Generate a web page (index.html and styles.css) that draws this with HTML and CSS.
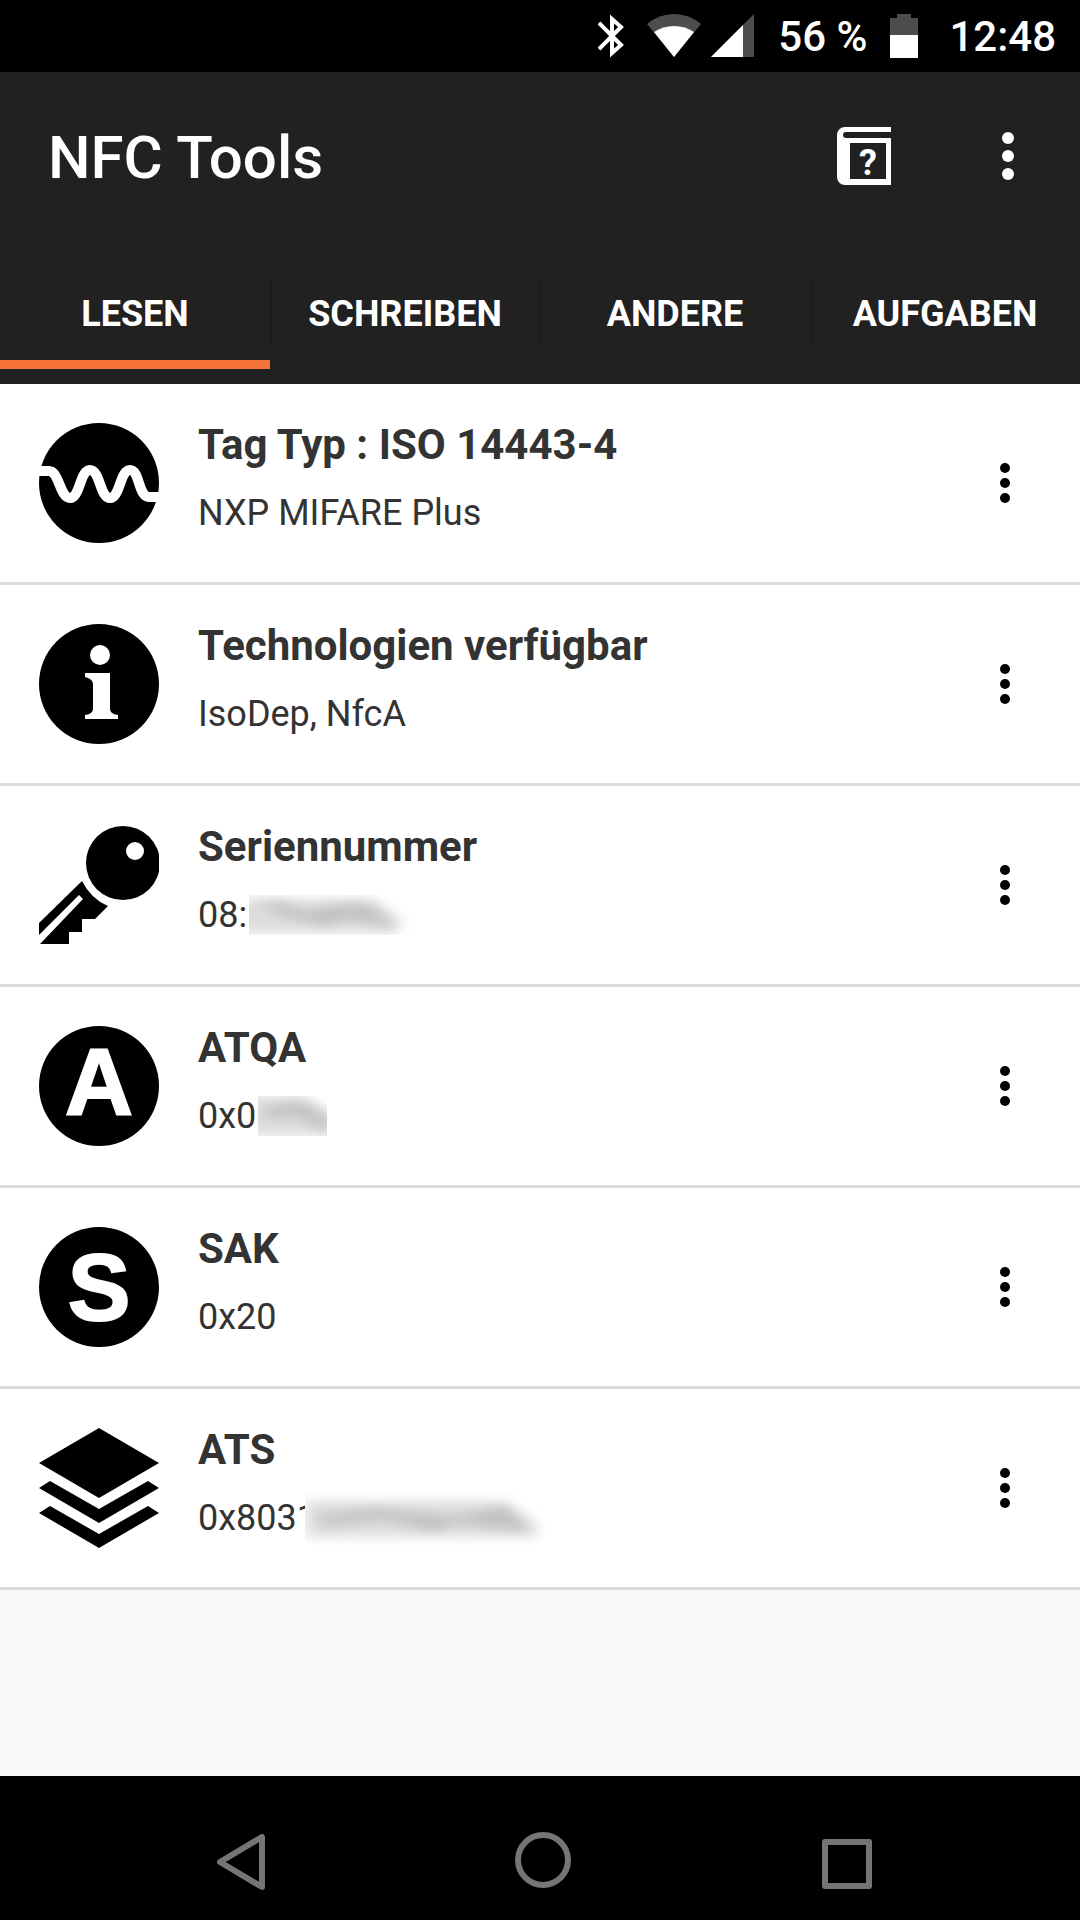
FILE: index.html
```html
<!DOCTYPE html>
<html lang="de">
<head>
    <meta charset="UTF-8">
    <meta name="viewport" content="width=device-width, initial-scale=1.0">
    <title>NFC Tools</title>
    <link rel="stylesheet" href="styles.css">
</head>
<body>
    <!-- Symbols used more than once -->
    <svg class="defs" width="0" height="0" aria-hidden="true">
        <symbol id="dots" viewBox="0 0 48 48">
            <circle cx="24" cy="6" r="6"/>
            <circle cx="24" cy="24" r="6"/>
            <circle cx="24" cy="42" r="6"/>
        </symbol>
        <filter id="soft" x="-20%" y="-50%" width="140%" height="200%">
            <feGaussianBlur stdDeviation="7 6"/>
        </filter>
    </svg>

    <div class="status-bar">
        <svg width="26" height="44" viewBox="0 0 26 44" fill="none" stroke="#fff" stroke-width="4">
            <path d="M1 9L23 31L14 39V5L23 13L1 35"/>
        </svg>
        <div class="signals">
            <svg width="54" height="44" viewBox="0 0 54 44">
                <path fill="#4d4d4d" d="M27 43L0 10Q12 0 27 0T54 10Z"/>
                <path fill="#fff" d="M27 43L7 18Q16 12 27 12T47 18Z"/>
            </svg>
            <svg width="44" height="44" viewBox="0 0 44 44">
                <path fill="#4d4d4d" d="M43 0V43H0Z"/>
                <path fill="#fff" d="M32 11V43H0Z"/>
            </svg>
        </div>
        <span>56 %</span>
        <svg width="28" height="44" viewBox="0 0 28 44">
            <path fill="#4d4d4d" d="M7 0H21V4H28V22H0V4H7Z"/>
            <path fill="#fff" d="M0 21H28V44H0Z"/>
        </svg>
        <span class="clock">12:48</span>
    </div>

    <header class="header">
        <div class="app-bar">
            <h1>NFC Tools</h1>
            <button class="icon-button" aria-label="Hilfe">
                <svg width="54" height="58" viewBox="0 0 54 58">
                    <path fill="#fff" fill-rule="evenodd" d="M8 0H54V5H9a3 3 0 0 0 0 6H54V58H8a8 8 0 0 1-8-8V8a8 8 0 0 1 8-8ZM13 16V52H49V16Z"/>
                    <text class="help-mark" x="31" y="48" text-anchor="middle">?</text>
                </svg>
            </button>
            <button class="icon-button" aria-label="Menü">
                <svg width="48" height="48"><use href="#dots"/></svg>
            </button>
        </div>
        <div class="tabs" role="tablist">
            <button class="tab active" role="tab" aria-selected="true">LESEN</button>
            <button class="tab" role="tab" aria-selected="false">SCHREIBEN</button>
            <button class="tab" role="tab" aria-selected="false">ANDERE</button>
            <button class="tab" role="tab" aria-selected="false">AUFGABEN</button>
        </div>
    </header>

    <main>
        <ul class="tag-list">
            <li class="tag-item">
                <svg class="tag-icon" viewBox="0 0 120 120">
                    <circle cx="60" cy="60" r="60"/>
                    <path fill="none" stroke="#fff" stroke-width="10" d="M-1 48H10C20 48 21 75 31 75S41 47 51 47S61 75 71 75S81 47 91 47S99 74 110 74H121"/>
                </svg>
                <div class="info">
                    <h2>Tag Typ : ISO 14443-4</h2>
                    <p>NXP MIFARE Plus</p>
                </div>
                <button class="more" aria-label="Mehr">
                    <svg width="40" height="40"><use href="#dots"/></svg>
                </button>
            </li>
            <li class="tag-item">
                <svg class="tag-icon" viewBox="0 0 120 120">
                    <circle cx="60" cy="60" r="60"/>
                    <circle cx="61" cy="31" r="10" fill="#fff"/>
                    <path fill="#fff" d="M46 49H71V85Q71 90 79 91V95H46V91Q54 90 54 85V60Q54 55 46 53Z"/>
                </svg>
                <div class="info">
                    <h2>Technologien verfügbar</h2>
                    <p>IsoDep, NfcA</p>
                </div>
                <button class="more" aria-label="Mehr">
                    <svg width="40" height="40"><use href="#dots"/></svg>
                </button>
            </li>
            <li class="tag-item">
                <svg class="tag-icon" viewBox="0 0 120 120">
                    <circle cx="84" cy="38" r="37"/>
                    <circle cx="96" cy="26" r="9" fill="#fff"/>
                    <path d="M43 56L0 98V110L40 70L44 74L1 119H30V107H43V94H56L69 81Q52 74 43 56Z"/>
                </svg>
                <div class="info">
                    <h2>Seriennummer</h2>
                    <p><span class="value">08:<svg class="smudge" width="162" height="40" viewBox="0 0 162 40">
                        <path class="smudge-base" filter="url(#soft)" d="M-20 4H122L150 22V38H-20Z"/>
                        <path class="smudge-dark" filter="url(#soft)" d="M4 8H34L54 16L94 10H120L148 32L100 24L76 30L40 22Z"/>
                    </svg></span></p>
                </div>
                <button class="more" aria-label="Mehr">
                    <svg width="40" height="40"><use href="#dots"/></svg>
                </button>
            </li>
            <li class="tag-item">
                <svg class="tag-icon" viewBox="0 0 120 120">
                    <circle cx="60" cy="60" r="60"/>
                    <text class="letter" x="60" y="89" text-anchor="middle">A</text>
                </svg>
                <div class="info">
                    <h2>ATQA</h2>
                    <p><span class="value">0x0<svg class="smudge" width="69" height="40" viewBox="0 0 69 40">
                        <path class="smudge-base" filter="url(#soft)" d="M-20 0H42L84 20V40H-20Z"/>
                        <path class="smudge-dark" filter="url(#soft)" d="M4 12L44 6L76 28L64 34L40 20L8 22Z"/>
                    </svg></span></p>
                </div>
                <button class="more" aria-label="Mehr">
                    <svg width="40" height="40"><use href="#dots"/></svg>
                </button>
            </li>
            <li class="tag-item">
                <svg class="tag-icon" viewBox="0 0 120 120">
                    <circle cx="60" cy="60" r="60"/>
                    <text class="letter" x="60" y="93" text-anchor="middle">S</text>
                </svg>
                <div class="info">
                    <h2>SAK</h2>
                    <p>0x20</p>
                </div>
                <button class="more" aria-label="Mehr">
                    <svg width="40" height="40"><use href="#dots"/></svg>
                </button>
            </li>
            <li class="tag-item">
                <svg class="tag-icon" viewBox="0 0 120 120">
                    <path d="M60 0L120 35L60 70L0 35Z"/>
                    <path d="M0 60L11 53L60 81L109 53L120 60L60 95Z"/>
                    <path d="M0 85L11 78L60 106L109 78L120 85L60 120Z"/>
                </svg>
                <div class="info">
                    <h2>ATS</h2>
                    <p><span class="value">0x8031<svg class="smudge over" width="240" height="54" viewBox="0 0 240 54">
                        <path class="smudge-base" filter="url(#soft)" d="M0 10H200L232 34V46H0Z"/>
                        <path class="smudge-dark" filter="url(#soft)" d="M10 26L68 18L110 22L150 26L200 16L226 40L150 32L130 40L80 28L20 34Z"/>
                    </svg></span></p>
                </div>
                <button class="more" aria-label="Mehr">
                    <svg width="40" height="40"><use href="#dots"/></svg>
                </button>
            </li>
        </ul>
    </main>

    <nav class="nav-bar">
        <button aria-label="Zurück">
            <svg width="60" height="60" viewBox="0 0 60 60"><path d="M51 7V57L9 32Z"/></svg>
        </button>
        <button aria-label="Startbildschirm">
            <svg width="60" height="60" viewBox="0 0 60 60"><circle cx="30" cy="30" r="25"/></svg>
        </button>
        <button aria-label="Übersicht">
            <svg width="60" height="60" viewBox="0 0 60 60"><path d="M10 12H54V56H10Z"/></svg>
        </button>
    </nav>
</body>
</html>
```
FILE: styles.css
```css
* {
    margin: 0;
    padding: 0;
    box-sizing: border-box;
    font-family: Roboto, sans-serif;
}

body {
    display: flex;
    flex-direction: column;
    min-height: 100vh;
    background: #fafafa;
}

svg {
    display: block;
    flex-shrink: 0;
}

button {
    border: none;
    background: none;
    cursor: pointer;
}

.defs {
    position: absolute;
}

/* Status Bar */
.status-bar {
    display: flex;
    justify-content: flex-end;
    align-items: center;
    gap: 23px;
    height: 72px;
    padding-right: 24px;
    background: #000;
    color: #fff;
    font-size: 42px;
    font-weight: 500;
}

.signals {
    display: flex;
    gap: 10px;
}

.clock {
    margin-left: 8px;
}

/* Header */
.header {
    padding-bottom: 15px;
    background: #212121;
    color: #fff;
}

.app-bar {
    display: flex;
    align-items: center;
    height: 168px;
    padding-left: 48px;
}

.app-bar h1 {
    flex: 1;
    padding-top: 2px;
    font-size: 60px;
    font-weight: 500;
}

.icon-button {
    display: flex;
    justify-content: center;
    align-items: center;
    width: 144px;
    height: 144px;
    fill: #fff;
}

.help-mark {
    font-size: 36px;
    font-weight: 700;
}

/* Tabs */
.tabs {
    display: flex;
    margin-top: 24px;
}

.tab {
    flex: 1 1 0;
    height: 105px;
    padding-top: 4px;
    border-bottom: 9px solid transparent;
    color: #fff;
    font-size: 36px;
    font-weight: 700;
}

.tab + .tab {
    background: linear-gradient(#1d1d1d, #1d1d1d) no-repeat left center / 2px 72px;
}

.tab.active {
    border-bottom-color: #f77438;
}

/* Tag List */
.tag-list {
    list-style: none;
}

.tag-item {
    display: flex;
    align-items: center;
    min-height: 201px;
    padding-left: 39px;
    background: #fff;
    border-bottom: 3px solid #dbdbdb;
}

.tag-icon {
    width: 120px;
    height: 120px;
    margin-right: 39px;
}

.letter {
    fill: #fff;
    stroke: #fff;
    stroke-width: 2px;
    font-family: "Liberation Sans", sans-serif;
    font-size: 94px;
    font-weight: 700;
}

.info {
    flex: 1;
    padding-bottom: 14px;
    color: #333;
}

.info h2 {
    margin-bottom: 14px;
    font-size: 42px;
    font-weight: 700;
    line-height: 60px;
}

.info p {
    font-size: 36px;
    line-height: 48px;
}

.more {
    display: flex;
    justify-content: center;
    align-items: center;
    width: 150px;
    height: 150px;
}

/* Blurred-out values */
.value {
    position: relative;
    display: inline-block;
}

.smudge {
    position: absolute;
    top: 50%;
    left: 100%;
    margin-left: 2px;
    transform: translateY(-50%);
    overflow: hidden;
    background: #fff;
}

.smudge.over {
    margin-left: -12px;
}

.smudge-base {
    fill: #dedede;
}

.smudge-dark {
    fill: #c0c0c0;
}

/* Navigation Bar */
.nav-bar {
    display: grid;
    grid-template-columns: repeat(3, 1fr);
    height: 144px;
    margin-top: auto;
    padding: 24px 84px 0 90px;
    background: #000;
}

.nav-bar button {
    display: flex;
    justify-content: center;
    align-items: center;
}

.nav-bar svg {
    fill: none;
    stroke: #757575;
    stroke-width: 6px;
    stroke-linejoin: round;
}
```
